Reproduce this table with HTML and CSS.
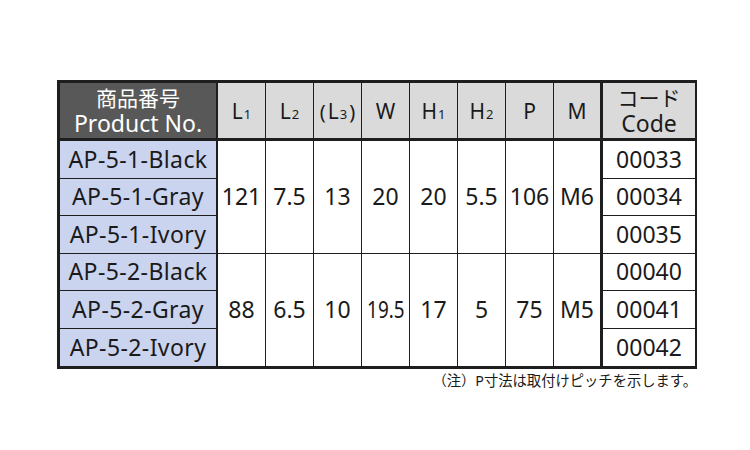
FILE: index.html
```html
<!DOCTYPE html>
<html lang="ja">
<head>
<meta charset="utf-8">
<title>AP-5 寸法表</title>
<link rel="stylesheet" href="styles.css">
</head>
<body>
<div class="wrap">
  <div class="grid">
    <div class="h hp pc"><span class="jp">商品番号</span><span class="en">Product No.</span></div>
    <div class="h"><span class="t">L<span class="sub">1</span></span></div>
    <div class="h"><span class="t">L<span class="sub">2</span></span></div>
    <div class="h"><span class="t"><span class="par pl">(</span>L<span class="sub">3</span><span class="par pr">)</span></span></div>
    <div class="h"><span class="t">W</span></div>
    <div class="h"><span class="t">H<span class="sub">1</span></span></div>
    <div class="h"><span class="t">H<span class="sub">2</span></span></div>
    <div class="h"><span class="t">P</span></div>
    <div class="h m"><span class="t">M</span></div>
    <div class="h hc cd"><span class="jp">コード</span><span class="en">Code</span></div>

    <div class="pc prod">AP-5-1-Black</div>
    <div class="sp">121</div>
    <div class="sp">7.5</div>
    <div class="sp">13</div>
    <div class="sp">20</div>
    <div class="sp">20</div>
    <div class="sp">5.5</div>
    <div class="sp">106</div>
    <div class="sp m">M6</div>
    <div class="cd">00033</div>

    <div class="pc prod">AP-5-1-Gray</div>
    <div class="cd">00034</div>

    <div class="pc prod">AP-5-1-Ivory</div>
    <div class="cd">00035</div>

    <div class="pc prod">AP-5-2-Black</div>
    <div class="sp last">88</div>
    <div class="sp last">6.5</div>
    <div class="sp last">10</div>
    <div class="sp last"><span class="cond">19.5</span></div>
    <div class="sp last">17</div>
    <div class="sp last">5</div>
    <div class="sp last">75</div>
    <div class="sp m last">M5</div>
    <div class="cd">00040</div>

    <div class="pc prod">AP-5-2-Gray</div>
    <div class="cd">00041</div>

    <div class="pc prod last">AP-5-2-Ivory</div>
    <div class="cd last">00042</div>
  </div>
  <p class="note">（注）P寸法は取付けピッチを示します。</p>
</div>
</body>
</html>
```

FILE: styles.css
```css
body {
  margin: 0;
  background: #ffffff;
  font-family: "Noto Sans", "Noto Sans CJK JP", sans-serif;
  color: #1a1a1a;
}

.wrap {
  width: 640px;
  margin: 80px 0 0 57px;
}

.grid {
  display: grid;
  grid-template-columns: 158px repeat(7, 48px) 49px 92px;
  grid-template-rows: 58px repeat(6, 37.5px);
  border: 3px solid #1e1e1e;
  border-right-width: 2px;
}

.grid > div {
  box-sizing: border-box;
  display: flex;
  align-items: center;
  justify-content: center;
  border-right: 1px solid #1e1e1e;
  border-bottom: 1px solid #1e1e1e;
  font-size: 23px;
  line-height: 1;
  white-space: nowrap;
}

.grid > .h {
  background: #dadada;
  border-bottom: 3px solid #1e1e1e;
  font-size: 21px;
  padding-top: 2px;
}

.grid > .hp,
.grid > .hc {
  flex-direction: column;
  padding-top: 1px;
}

.jp {
  font-size: 21px;
  line-height: 25px;
}

.en {
  font-size: 23px;
  line-height: 25px;
}

.grid > .hp {
  background: #585858;
  color: #ffffff;
}

.grid > .pc {
  border-right-width: 2px;
}

.grid > .m {
  border-right-width: 3px;
}

.grid > .cd {
  border-right: 0;
}

.grid > .sp {
  grid-row: span 3;
}

.grid > .last {
  border-bottom: 0;
}

.prod {
  background: #cad4ef;
  letter-spacing: 0.4px;
}

.t {
  display: inline-block;
  white-space: nowrap;
}

.sub {
  font-size: 13px;
  margin-left: 1px;
}

.par {
  font-size: 20px;
}

.pl {
  margin-right: 2px;
}

.pr {
  margin-left: 2px;
}

.cond {
  display: inline-block;
  transform: scaleX(0.82);
}

.note {
  margin: 4px 0 0;
  font-size: 14.3px;
  line-height: 16px;
  text-align: right;
  color: #1a1a1a;
}
```
